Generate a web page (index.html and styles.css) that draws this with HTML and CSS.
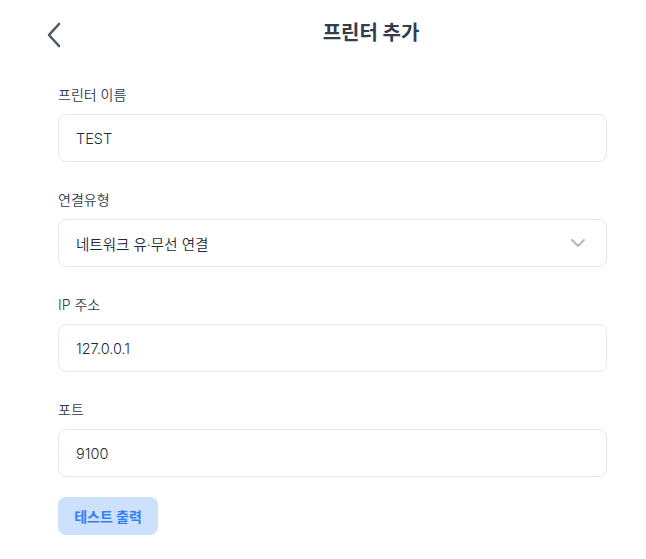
FILE: index.html
```html
<!DOCTYPE html>
<html lang="ko">
<head>
<meta charset="utf-8">
<link rel="stylesheet" href="styles.css">
</head>
<body>
<div class="page">
  <header class="header">
    <button class="back" aria-label="뒤로">
      <svg width="16" height="26" viewBox="0 0 16 26"><path d="M13 2 L3 13 L13 24" fill="none" stroke="#4e5968" stroke-width="2.6" stroke-linecap="round" stroke-linejoin="round"/></svg>
    </button>
    <h1 class="title">프린터 추가</h1>
  </header>
  <main class="form">
    <div class="field">
      <label class="label">프린터 이름</label>
      <div class="input">TEST</div>
    </div>
    <div class="field">
      <label class="label">연결유형</label>
      <div class="input select">
        <span>네트워크 유·무선 연결</span>
        <svg width="16" height="10" viewBox="0 0 16 10"><path d="M2 2 L8 8 L14 2" fill="none" stroke="#b0b8c1" stroke-width="2" stroke-linecap="round" stroke-linejoin="round"/></svg>
      </div>
    </div>
    <div class="field">
      <label class="label">IP 주소</label>
      <div class="input">127.0.0.1</div>
    </div>
    <div class="field">
      <label class="label">포트</label>
      <div class="input">9100</div>
    </div>
    <button class="test-btn">테스트 출력</button>
  </main>
</div>
</body>
</html>
```
FILE: styles.css
```css
* { box-sizing: border-box; }
html, body { margin: 0; padding: 0; background: #fff; }
body { font-family: Inter, "Noto Sans CJK KR", sans-serif; color: #191f28; }
.page { width: 646px; }
.header { display: flex; align-items: center; height: 66px; }
.back { width: 94px; height: 66px; border: 0; background: none; padding: 3px 0 0 46px; display: flex; align-items: center; justify-content: flex-start; }
.back svg { display: block; }
.title { flex: 1; margin: 0; text-align: center; font-size: 20px; font-weight: 700; color: #333d4b; padding: 0 0 3px 2px; }
.form { padding: 19px 39px 0 58px; display: flex; flex-direction: column; }
.field { display: flex; flex-direction: column; margin-bottom: 28px; }
.label { font-size: 14px; color: #333d4b; line-height: 20px; margin-bottom: 9px; font-weight: 350; }
.input { height: 48px; border: 1px solid #e5e8eb; border-radius: 8px; padding: 0 17px; display: flex; align-items: center; font-size: 14.5px; font-weight: 350; color: #222a35; }
.select { justify-content: space-between; padding-right: 20px; }
.test-btn { align-self: flex-start; width: 100px; height: 38px; border: 0; border-radius: 8px; background: #cde1fd; color: #3182f6; font-family: inherit; font-size: 14px; font-weight: 700; margin-top: -8px; }
```
